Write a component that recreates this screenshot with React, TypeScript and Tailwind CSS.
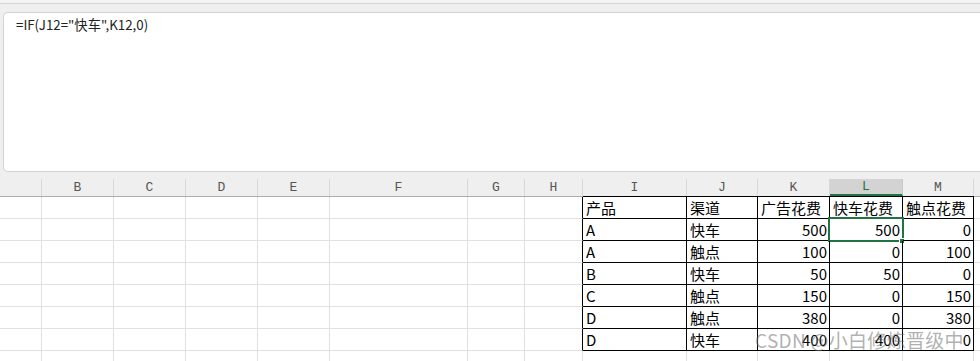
import React from "react";

const cols = [
  { l: "", w: 42 },
  { l: "B", w: 72 },
  { l: "C", w: 72 },
  { l: "D", w: 72 },
  { l: "E", w: 72 },
  { l: "F", w: 138 },
  { l: "G", w: 57 },
  { l: "H", w: 58 },
  { l: "I", w: 104 },
  { l: "J", w: 71 },
  { l: "K", w: 72 },
  { l: "L", w: 73 },
  { l: "M", w: 71 },
  { l: "", w: 72 },
];

type Cell = { v: string; r?: boolean };
const data: Cell[][] = [
  [{ v: "产品" }, { v: "渠道" }, { v: "广告花费" }, { v: "快车花费" }, { v: "触点花费" }],
  [{ v: "A" }, { v: "快车" }, { v: "500", r: true }, { v: "500", r: true }, { v: "0", r: true }],
  [{ v: "A" }, { v: "触点" }, { v: "100", r: true }, { v: "0", r: true }, { v: "100", r: true }],
  [{ v: "B" }, { v: "快车" }, { v: "50", r: true }, { v: "50", r: true }, { v: "0", r: true }],
  [{ v: "C" }, { v: "触点" }, { v: "150", r: true }, { v: "0", r: true }, { v: "150", r: true }],
  [{ v: "D" }, { v: "触点" }, { v: "380", r: true }, { v: "0", r: true }, { v: "380", r: true }],
  [{ v: "D" }, { v: "快车" }, { v: "400", r: true }, { v: "400", r: true }, { v: "0", r: true }],
];

const cellFont = { fontFamily: '"Noto Sans CJK SC", "Noto Sans", sans-serif' };
const hdrFont = { fontFamily: '"Liberation Mono", "DejaVu Sans Mono", monospace' };

export default function App() {
  const rows = Array.from({ length: 8 }, (_, i) => i);
  return (
    <div className="w-[980px] h-[361px] overflow-hidden bg-white relative">
      {/* formula area */}
      <div className="h-[3px] bg-[#f3f3f3]" />
      <div className="h-[169px] bg-[#efefef] border-t border-[#d6d6d6] pt-[8px] pl-[3px]">
        <div
          className="h-[160px] bg-white border border-r-0 border-[#d2d2d2] rounded-l-[5px] pl-[12px] pt-[3px] text-[13.3px] leading-[18px] text-[#222]"
          style={cellFont}
        >
          =IF(J12="快车",K12,0)
        </div>
      </div>
      {/* column headers */}
      <div className="flex h-[25px] bg-[#efefef] border-b border-[#ababab] overflow-hidden">
        {cols.map((c, i) => {
          const sel = c.l === "L";
          return (
            <div
              key={i}
              className={`shrink-0 mt-[7px] h-[17px] flex items-center justify-center text-[13px] border-r ${
                sel
                  ? "bg-[#d3d3d3] text-[#217346] border-[#c8c8c8] border-b-2 border-b-[#217346]"
                  : "text-[#555] border-[#d8d8d8]"
              }`}
              style={{ width: c.w, ...hdrFont }}
            >
              {c.l}
            </div>
          );
        })}
      </div>
      {/* grid rows */}
      {rows.map((r) => (
        <div key={r} className="flex h-[22px] overflow-visible">
          {cols.map((c, ci) => {
            const inTable = r < 7 && ci >= 8 && ci <= 12;
            const leftOfTable = r < 7 && ci === 7;
            const d = inTable ? data[r][ci - 8] : null;
            const isSel = r === 1 && ci === 11;
            let cls = "border-r border-b border-[#e1e1e1]";
            if (inTable) cls = "border-r border-b border-black";
            else if (leftOfTable) cls = "border-r border-b border-r-black border-b-[#e1e1e1]";
            return (
              <div
                key={ci}
                className={`shrink-0 relative h-[22px] text-[15px] leading-[21px] text-black ${cls} ${
                  d?.r ? "text-right pr-[2px]" : "pl-[3px]"
                } ${r === 0 && inTable ? "border-t border-t-black -mt-[1px] h-[23px]" : ""}`}
                style={{ width: c.w, ...cellFont }}
              >
                {d?.v}
                {isSel && (
                  <>
                    <div className="absolute -left-[2px] -top-[2px] w-[76px] h-[25px] border-2 border-[#217346] pointer-events-none" />
                    <div className="absolute left-[69px] top-[19px] w-[6px] h-[6px] bg-[#217346] border border-white" />
                  </>
                )}
              </div>
            );
          })}
        </div>
      ))}
      {/* watermark */}
      <div
        className="absolute left-[755px] top-[327px] text-[19px] leading-[26px] tracking-[0.3px] text-[rgba(110,110,110,0.55)] whitespace-nowrap pointer-events-none"
        style={cellFont}
      >
        CSDN @小白修炼晋级中
      </div>
    </div>
  );
}
